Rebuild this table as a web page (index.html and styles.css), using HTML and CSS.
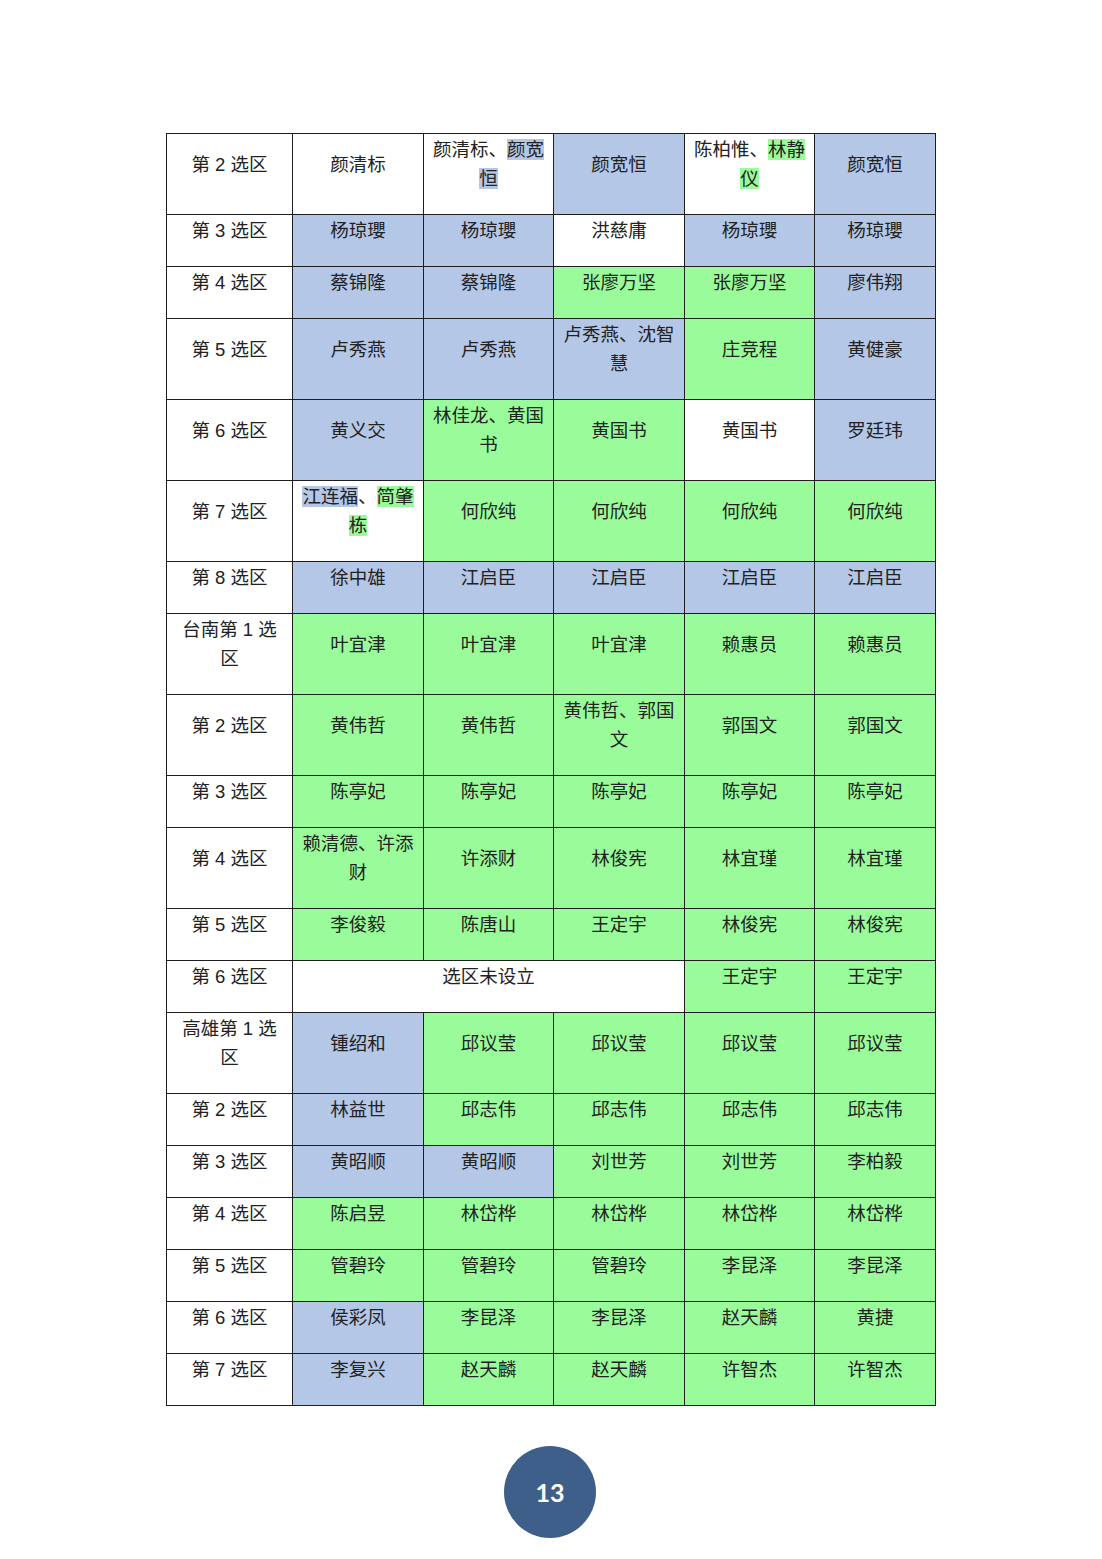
FILE: index.html
```html
<!DOCTYPE html>
<html lang="zh-CN">
<head>
<meta charset="utf-8">
<title>选区表</title>
<link rel="stylesheet" href="styles.css">
</head>
<body>
<div class="page">
  <table class="grid">
    <colgroup>
      <col class="c1"><col class="c2"><col class="c3"><col class="c4"><col class="c5"><col class="c6">
    </colgroup>
    <tbody>
      <tr><td>第 2 选区</td><td>颜清标</td><td>颜清标、<span class="hb">颜宽恒</span></td><td class="b">颜宽恒</td><td>陈柏惟、<span class="hg">林静仪</span></td><td class="b">颜宽恒</td></tr>
      <tr><td>第 3 选区</td><td class="b">杨琼瓔</td><td class="b">杨琼瓔</td><td>洪慈庸</td><td class="b">杨琼瓔</td><td class="b">杨琼瓔</td></tr>
      <tr><td>第 4 选区</td><td class="b">蔡锦隆</td><td class="b">蔡锦隆</td><td class="g">张廖万坚</td><td class="g">张廖万坚</td><td class="b">廖伟翔</td></tr>
      <tr><td>第 5 选区</td><td class="b">卢秀燕</td><td class="b">卢秀燕</td><td class="b">卢秀燕、沈智慧</td><td class="g">庄竞程</td><td class="b">黄健豪</td></tr>
      <tr><td>第 6 选区</td><td class="b">黄义交</td><td class="g">林佳龙、黄国书</td><td class="g">黄国书</td><td>黄国书</td><td class="b">罗廷玮</td></tr>
      <tr><td>第 7 选区</td><td><span class="hb">江连福</span>、<span class="hg">简肇栋</span></td><td class="g">何欣纯</td><td class="g">何欣纯</td><td class="g">何欣纯</td><td class="g">何欣纯</td></tr>
      <tr><td>第 8 选区</td><td class="b">徐中雄</td><td class="b">江启臣</td><td class="b">江启臣</td><td class="b">江启臣</td><td class="b">江启臣</td></tr>
      <tr><td>台南第 1 选区</td><td class="g">叶宜津</td><td class="g">叶宜津</td><td class="g">叶宜津</td><td class="g">赖惠员</td><td class="g">赖惠员</td></tr>
      <tr><td>第 2 选区</td><td class="g">黄伟哲</td><td class="g">黄伟哲</td><td class="g">黄伟哲、郭国文</td><td class="g">郭国文</td><td class="g">郭国文</td></tr>
      <tr><td>第 3 选区</td><td class="g">陈亭妃</td><td class="g">陈亭妃</td><td class="g">陈亭妃</td><td class="g">陈亭妃</td><td class="g">陈亭妃</td></tr>
      <tr><td>第 4 选区</td><td class="g">赖清德、许添财</td><td class="g">许添财</td><td class="g">林俊宪</td><td class="g">林宜瑾</td><td class="g">林宜瑾</td></tr>
      <tr><td>第 5 选区</td><td class="g">李俊毅</td><td class="g">陈唐山</td><td class="g">王定宇</td><td class="g">林俊宪</td><td class="g">林俊宪</td></tr>
      <tr><td>第 6 选区</td><td colspan="3">选区未设立</td><td class="g">王定宇</td><td class="g">王定宇</td></tr>
      <tr><td>高雄第 1 选区</td><td class="b">锺绍和</td><td class="g">邱议莹</td><td class="g">邱议莹</td><td class="g">邱议莹</td><td class="g">邱议莹</td></tr>
      <tr><td>第 2 选区</td><td class="b">林益世</td><td class="g">邱志伟</td><td class="g">邱志伟</td><td class="g">邱志伟</td><td class="g">邱志伟</td></tr>
      <tr><td>第 3 选区</td><td class="b">黄昭顺</td><td class="b">黄昭顺</td><td class="g">刘世芳</td><td class="g">刘世芳</td><td class="g">李柏毅</td></tr>
      <tr><td>第 4 选区</td><td class="g">陈启昱</td><td class="g">林岱桦</td><td class="g">林岱桦</td><td class="g">林岱桦</td><td class="g">林岱桦</td></tr>
      <tr><td>第 5 选区</td><td class="g">管碧玲</td><td class="g">管碧玲</td><td class="g">管碧玲</td><td class="g">李昆泽</td><td class="g">李昆泽</td></tr>
      <tr><td>第 6 选区</td><td class="b">侯彩凤</td><td class="g">李昆泽</td><td class="g">李昆泽</td><td class="g">赵天麟</td><td class="g">黄捷</td></tr>
      <tr><td>第 7 选区</td><td class="b">李复兴</td><td class="g">赵天麟</td><td class="g">赵天麟</td><td class="g">许智杰</td><td class="g">许智杰</td></tr>
    </tbody>
  </table>
  <div class="pagenum">13</div>
</div>
</body>
</html>
```
FILE: styles.css
```css
html, body {
  margin: 0;
  padding: 0;
  background: #ffffff;
}
.page {
  width: 1102px;
  padding-top: 133px;
  padding-left: 166px;
  box-sizing: border-box;
}
.grid {
  border-collapse: collapse;
  table-layout: fixed;
  width: 769px;
  font-family: "Liberation Sans", "Noto Sans CJK SC", sans-serif;
  font-size: 18.5px;
  color: #222222;
}
.c1 { width: 126px; }
.c2 { width: 131px; }
.c3 { width: 130px; }
.c4 { width: 131px; }
.c5 { width: 130px; }
.c6 { width: 121px; }
.grid td {
  border: 1px solid #1e1e1e;
  padding: 1px 8px 21px 8px;
  line-height: 29px;
  text-align: center;
  vertical-align: middle;
  background: #ffffff;
}
.grid td.b { background: #b4c7e7; }
.grid td.g { background: #99fb99; }
.hb { background: #b4c7e7; }
.hg { background: #99fb99; }
.pagenum {
  width: 92px;
  height: 92px;
  margin: 40px 0 0 338px;
  border-radius: 50%;
  background: #3e5f8a;
  color: #ffffff;
  font-family: "Lato", "Open Sans", sans-serif;
  font-weight: 700;
  font-size: 25px;
  display: flex;
  align-items: center;
  justify-content: center;
}
```
